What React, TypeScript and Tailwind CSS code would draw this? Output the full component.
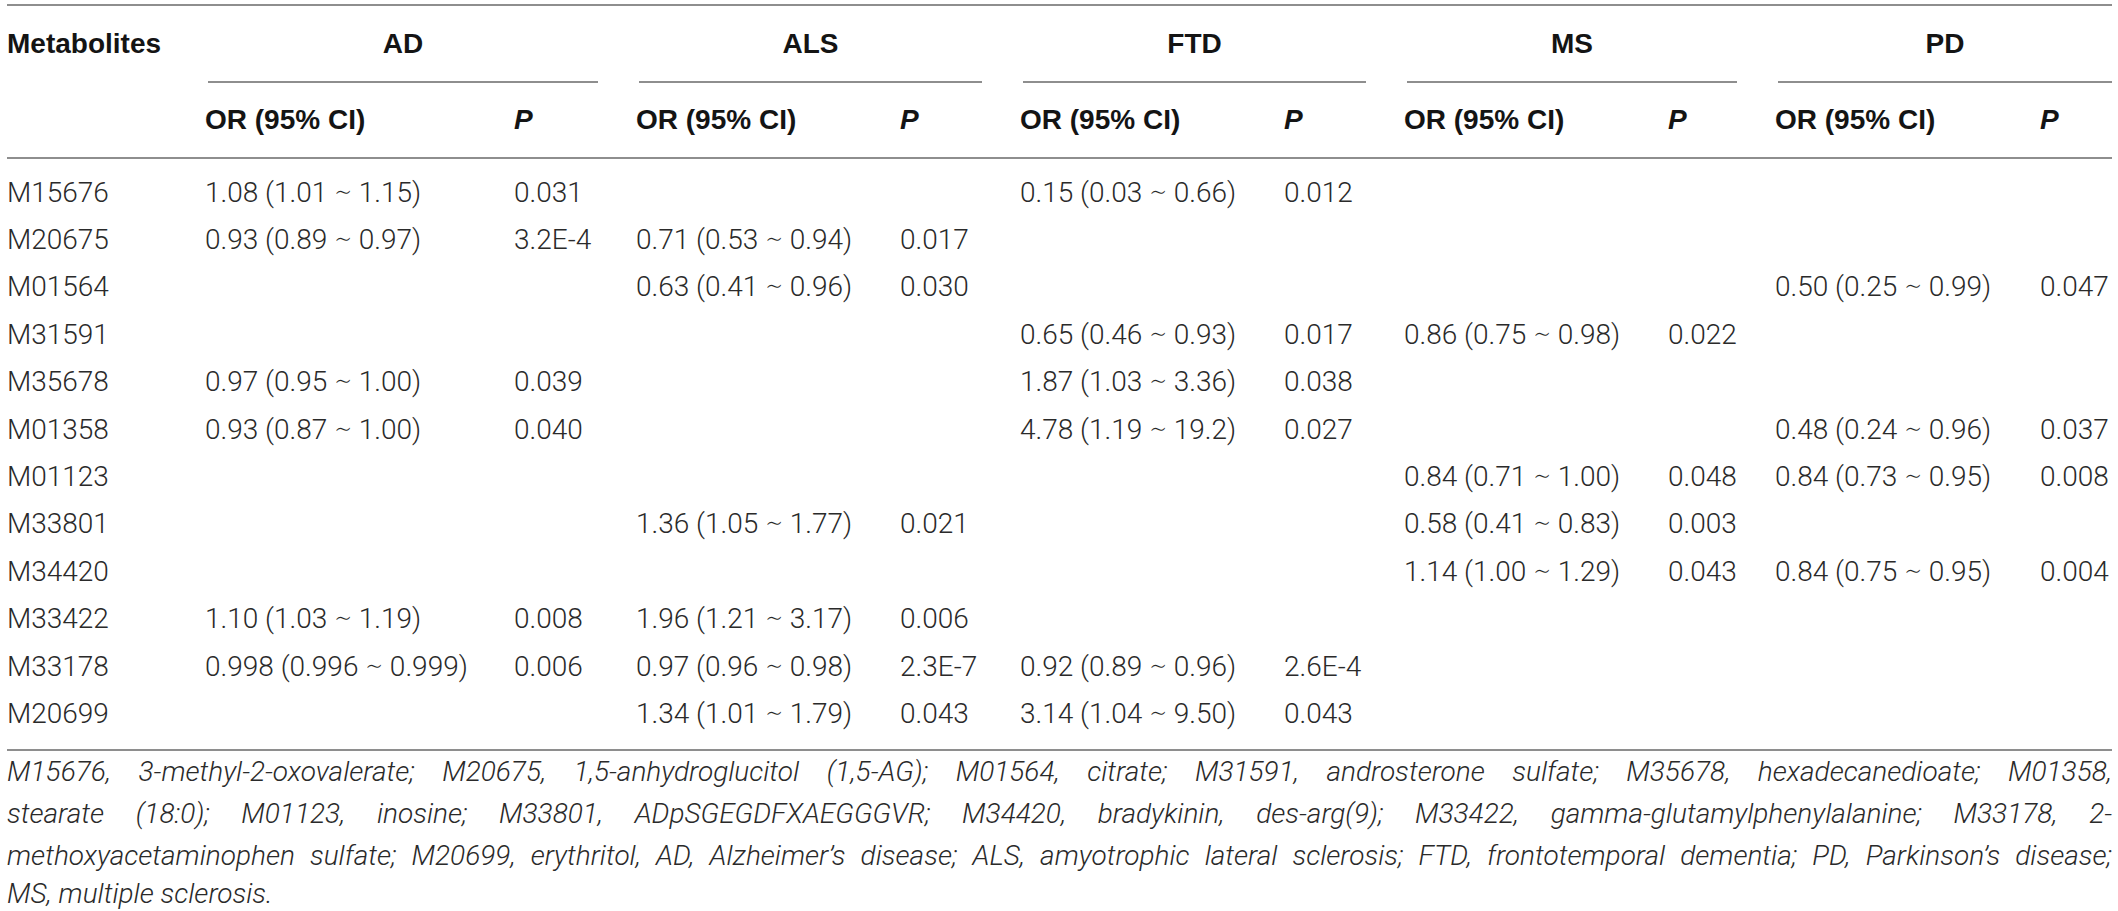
import React from "react";

const GRID =
  "grid grid-cols-[198px_309px_122px_264px_120px_264px_120px_264px_107px_265px_72px]";

const T = "∼";
const rows: string[][] = [
  ["M15676", `1.08 (1.01 ${T} 1.15)`, "0.031", "", "", `0.15 (0.03 ${T} 0.66)`, "0.012", "", "", "", ""],
  ["M20675", `0.93 (0.89 ${T} 0.97)`, "3.2E-4", `0.71 (0.53 ${T} 0.94)`, "0.017", "", "", "", "", "", ""],
  ["M01564", "", "", `0.63 (0.41 ${T} 0.96)`, "0.030", "", "", "", "", `0.50 (0.25 ${T} 0.99)`, "0.047"],
  ["M31591", "", "", "", "", `0.65 (0.46 ${T} 0.93)`, "0.017", `0.86 (0.75 ${T} 0.98)`, "0.022", "", ""],
  ["M35678", `0.97 (0.95 ${T} 1.00)`, "0.039", "", "", `1.87 (1.03 ${T} 3.36)`, "0.038", "", "", "", ""],
  ["M01358", `0.93 (0.87 ${T} 1.00)`, "0.040", "", "", `4.78 (1.19 ${T} 19.2)`, "0.027", "", "", `0.48 (0.24 ${T} 0.96)`, "0.037"],
  ["M01123", "", "", "", "", "", "", `0.84 (0.71 ${T} 1.00)`, "0.048", `0.84 (0.73 ${T} 0.95)`, "0.008"],
  ["M33801", "", "", `1.36 (1.05 ${T} 1.77)`, "0.021", "", "", `0.58 (0.41 ${T} 0.83)`, "0.003", "", ""],
  ["M34420", "", "", "", "", "", "", `1.14 (1.00 ${T} 1.29)`, "0.043", `0.84 (0.75 ${T} 0.95)`, "0.004"],
  ["M33422", `1.10 (1.03 ${T} 1.19)`, "0.008", `1.96 (1.21 ${T} 3.17)`, "0.006", "", "", "", "", "", ""],
  ["M33178", `0.998 (0.996 ${T} 0.999)`, "0.006", `0.97 (0.96 ${T} 0.98)`, "2.3E-7", `0.92 (0.89 ${T} 0.96)`, "2.6E-4", "", "", "", ""],
  ["M20699", "", "", `1.34 (1.01 ${T} 1.79)`, "0.043", `3.14 (1.04 ${T} 9.50)`, "0.043", "", "", "", ""],
];

const groups = ["AD", "ALS", "FTD", "MS", "PD"];

const footLines = [
  "M15676, 3-methyl-2-oxovalerate; M20675, 1,5-anhydroglucitol (1,5-AG); M01564, citrate; M31591, androsterone sulfate; M35678, hexadecanedioate; M01358,",
  "stearate (18:0); M01123, inosine; M33801, ADpSGEGDFXAEGGGVR; M34420, bradykinin, des-arg(9); M33422, gamma-glutamylphenylalanine; M33178, 2-",
  "methoxyacetaminophen sulfate; M20699, erythritol, AD, Alzheimer’s disease; ALS, amyotrophic lateral sclerosis; FTD, frontotemporal dementia; PD, Parkinson’s disease;",
];

export default function App() {
  return (
    <div className="w-[2118px] h-[911px] bg-white overflow-hidden pl-[7px] pt-[4px] font-['Liberation_Sans',Arial,sans-serif]">
      <div className="w-[2105px]">
        <div className="h-[2px] bg-[#8e8e8e]" />
        {/* group header row */}
        <div className={`${GRID} text-[28px] font-bold text-[#141414]`}>
          <div className="h-[75px] flex items-center">Metabolites</div>
          {groups.map((g, i) => (
            <div
              key={g}
              className={`col-span-2 flex flex-col ${i < 4 ? "pr-[38px]" : ""} pl-[3px]`}
            >
              <div className="h-[75px] flex items-center justify-center">{g}</div>
              <div className="h-[2px] bg-[#8e8e8e]" />
            </div>
          ))}
        </div>
        {/* sub header row */}
        <div className={`${GRID} h-[74px] text-[28px] font-bold text-[#141414]`}>
          <div />
          {groups.map((g) => (
            <React.Fragment key={g}>
              <div className="flex items-center">OR (95% CI)</div>
              <div className="flex items-center italic">P</div>
            </React.Fragment>
          ))}
        </div>
        <div className="h-[2px] bg-[#8e8e8e]" />
        {/* body */}
        <div className="pt-[10px] pb-[11px] text-[28px] text-[#2a2a2a] font-['Roboto',Arial,'DejaVu_Sans',sans-serif] font-light">
          {rows.map((r) => (
            <div key={r[0]} className={`${GRID} h-[47.4px]`}>
              {r.map((c, j) => (
                <div key={j} className="flex items-center whitespace-nowrap">
                  {c}
                </div>
              ))}
            </div>
          ))}
        </div>
        <div className="h-[2px] bg-[#8e8e8e]" />
        {/* footnote */}
        <div className="text-[28px] leading-[42px] italic font-light text-[#2a2a2a] font-['Roboto',Arial,sans-serif]">
          {footLines.map((l, i) => (
            <div key={i} className="text-justify [text-align-last:justify]">
              {l}
            </div>
          ))}
          <div className="leading-[34px]">MS, multiple sclerosis.</div>
        </div>
      </div>
    </div>
  );
}
